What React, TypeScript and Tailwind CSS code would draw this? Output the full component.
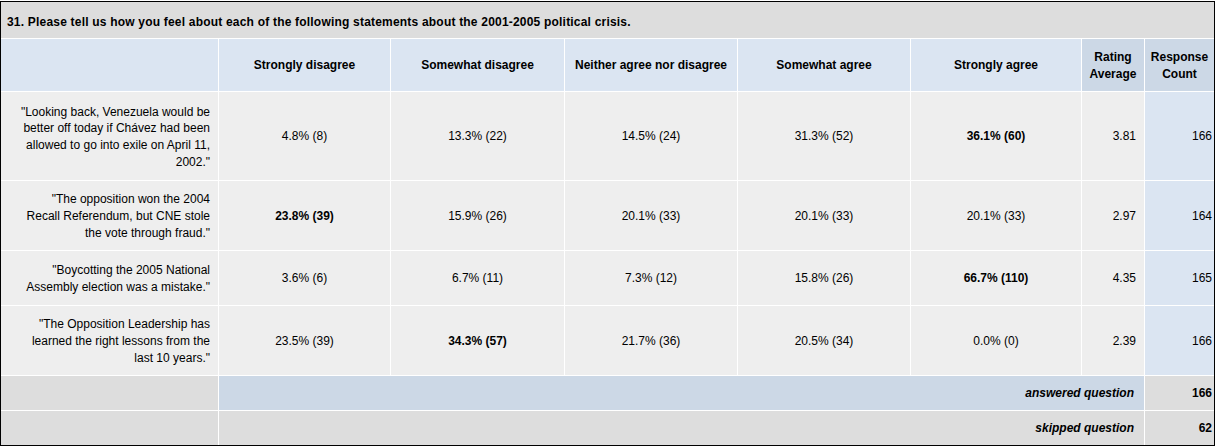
const columns = [
  'Strongly disagree',
  'Somewhat disagree',
  'Neither agree nor disagree',
  'Somewhat agree',
  'Strongly agree',
];

type Row = {
  statement: string;
  values: string[];
  bold: number;
  avg: string;
  count: string;
};

const rows: Row[] = [
  {
    statement:
      '"Looking back, Venezuela would be better off today if Chávez had been allowed to go into exile on April 11, 2002."',
    values: ['4.8% (8)', '13.3% (22)', '14.5% (24)', '31.3% (52)', '36.1% (60)'],
    bold: 4,
    avg: '3.81',
    count: '166',
  },
  {
    statement: '"The opposition won the 2004 Recall Referendum, but CNE stole the vote through fraud."',
    values: ['23.8% (39)', '15.9% (26)', '20.1% (33)', '20.1% (33)', '20.1% (33)'],
    bold: 0,
    avg: '2.97',
    count: '164',
  },
  {
    statement: '"Boycotting the 2005 National Assembly election was a mistake."',
    values: ['3.6% (6)', '6.7% (11)', '7.3% (12)', '15.8% (26)', '66.7% (110)'],
    bold: 4,
    avg: '4.35',
    count: '165',
  },
  {
    statement: '"The Opposition Leadership has learned the right lessons from the last 10 years."',
    values: ['23.5% (39)', '34.3% (57)', '21.7% (36)', '20.5% (34)', '0.0% (0)'],
    bold: 1,
    avg: '2.39',
    count: '166',
  },
];

export default function App() {
  return (
    <div className="w-[1215px] h-[448px] bg-white pt-px font-['Liberation_Sans',Arial,sans-serif] text-[12px] text-black">
      <div className="border border-black">
        <div className="grid grid-cols-[217px_171px_173px_172px_172px_170px_62px_69px] grid-rows-[36px_52px_88px_69px_54px_69px_34px_34px] gap-px bg-white">
          <div className="col-span-8 bg-[#dddddd] flex items-center pl-[6px] pt-[3px] font-bold tracking-[0.2px]">
            31. Please tell us how you feel about each of the following statements about the 2001-2005 political crisis.
          </div>

          <div className="bg-[#dbe5f2]" />
          {columns.map((c) => (
            <div key={c} className="bg-[#dbe5f2] flex items-center justify-center font-bold text-center">
              {c}
            </div>
          ))}
          <div className="bg-[#ccd8e6] flex items-center justify-center font-bold text-center leading-[17px] pt-[2px]">
            Rating
            <br />
            Average
          </div>
          <div className="bg-[#ccd8e6] flex items-center justify-center font-bold text-center leading-[17px] pt-[2px]">
            Response
            <br />
            Count
          </div>

          {rows.map((r) => (
            <>
              <div key={r.statement} className="bg-[#eeeeee] flex items-center justify-end text-right pl-[17px] pr-[8px] leading-[16.7px] pt-[2px]">
                {r.statement}
              </div>
              {r.values.map((v, i) => (
                <div
                  key={r.statement + i}
                  className={`bg-[#eeeeee] flex items-center justify-center ${i === r.bold ? 'font-bold' : ''}`}
                >
                  {v}
                </div>
              ))}
              <div className="bg-[#eeeeee] flex items-center justify-end pr-[8px]">{r.avg}</div>
              <div className="bg-[#dbe5f2] flex items-center justify-end pr-[2px]">{r.count}</div>
            </>
          ))}

          <div className="bg-[#dddddd]" />
          <div className="col-span-6 bg-[#ccd8e6] flex items-center justify-end pr-[10px] font-bold italic">
            answered question
          </div>
          <div className="bg-[#dddddd] flex items-center justify-end pr-[2px] font-bold">166</div>

          <div className="bg-[#dddddd]" />
          <div className="col-span-6 bg-[#dddddd] flex items-center justify-end pr-[10px] font-bold italic">
            skipped question
          </div>
          <div className="bg-[#dddddd] flex items-center justify-end pr-[2px] font-bold">62</div>
        </div>
      </div>
    </div>
  );
}
